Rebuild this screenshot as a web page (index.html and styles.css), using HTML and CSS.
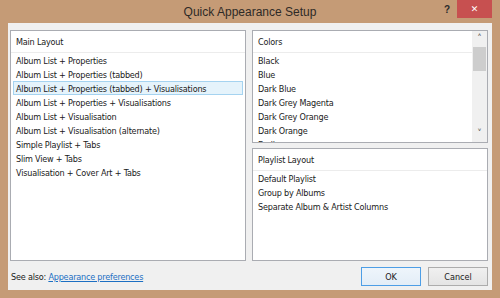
FILE: index.html
```html
<!DOCTYPE html>
<html lang="en">
<head>
  <meta charset="UTF-8">
  <title>Quick Appearance Setup</title>
  <link rel="stylesheet" href="styles.css">
</head>
<body>
  <div class="window">

    <!-- Title bar -->
    <div class="titlebar">
      <div class="title">Quick Appearance Setup</div>
      <div class="help">?</div>
      <div class="close">&#x2715;</div>
    </div>

    <div class="client">
      <div class="panels">

        <!-- Main layout list -->
        <div class="list main">
          <div class="list-head">Main Layout</div>
          <div class="list-body">
            <div class="row">Album List + Properties</div>
            <div class="row">Album List + Properties (tabbed)</div>
            <div class="row selected">Album List + Properties (tabbed) + Visualisations</div>
            <div class="row">Album List + Properties + Visualisations</div>
            <div class="row">Album List + Visualisation</div>
            <div class="row">Album List + Visualisation (alternate)</div>
            <div class="row">Simple Playlist + Tabs</div>
            <div class="row">Slim View + Tabs</div>
            <div class="row">Visualisation + Cover Art + Tabs</div>
          </div>
        </div>

        <div class="side">
          <!-- Colours list with scrollbar -->
          <div class="list colors">
            <div class="list-main">
              <div class="list-head">Colors</div>
              <div class="list-body">
                <div class="row">Black</div>
                <div class="row">Blue</div>
                <div class="row">Dark Blue</div>
                <div class="row">Dark Grey Magenta</div>
                <div class="row">Dark Grey Orange</div>
                <div class="row">Dark Orange</div>
                <div class="row">Endless</div>
              </div>
            </div>
            <div class="scrollbar">
              <div class="arrow">&#x2C4;</div>
              <div class="thumb"></div>
              <div class="track"></div>
              <div class="arrow">&#x2C5;</div>
            </div>
          </div>

          <!-- Playlist layout list -->
          <div class="list playlist">
            <div class="list-head">Playlist Layout</div>
            <div class="list-body">
              <div class="row">Default Playlist</div>
              <div class="row">Group by Albums</div>
              <div class="row">Separate Album &amp; Artist Columns</div>
            </div>
          </div>
        </div>

      </div>

      <div class="footer">
        <div class="see-also">See also: <a href="#">Appearance preferences</a></div>
        <div class="buttons">
          <button class="btn default">OK</button>
          <button class="btn">Cancel</button>
        </div>
      </div>
    </div>

  </div>
</body>
</html>
```

FILE: styles.css
```css
/* Reset + base */
* { margin:0; padding:0; box-sizing:border-box; }
body {
  background:#c59b76;
  font-family:"DejaVu Sans Condensed", "Liberation Sans", sans-serif;
  font-size:9px;
  letter-spacing:-0.2px;
  color:#1a1a1a;
}
.window { width:500px; height:298px; display:flex; flex-direction:column; }

/* Title bar */
.titlebar {
  height:23px;
  display:flex; align-items:flex-start;
  position:relative;
}
.title {
  flex:1;
  text-align:center;
  font-family:"Liberation Sans", sans-serif;
  font-size:12px; letter-spacing:0;
  color:#2e2a26;
  line-height:24px;
}
.help {
  position:absolute; top:0; left:441px;
  width:12px; line-height:20px;
  font-family:"Liberation Sans", sans-serif;
  font-weight:bold; font-size:10px; color:#2b2b2b;
  text-align:center;
}
.close {
  position:absolute; top:0; left:457px;
  width:35px; height:18px;
  background:#c75050; color:#fff;
  font-family:"DejaVu Sans", sans-serif;
  font-size:9px; line-height:18px; text-align:center;
}

/* Client area */
.client {
  flex:1;
  margin:0 8px 8px 8px;
  background:#f0f0f0;
  padding:7px 4px 0 2px;
  display:flex; flex-direction:column;
}
.panels {
  height:231px;
  display:flex; gap:6px;
}
.side {
  width:236px;
  display:flex; flex-direction:column; gap:5px;
}

/* List boxes */
.list {
  background:#fff;
  border:1px solid #aaacb2;
  overflow:hidden;
}
.list.main { width:236px; }
.list.colors { height:113px; display:flex; }
.list.playlist { flex:1; }
.list-main { flex:1; overflow:hidden; }
.list-head {
  height:22px;
  padding:0 5px;
  line-height:22px;
  border-bottom:1px solid #ececec;
}
.list-body { padding:0 2px; }
.row {
  height:14px; line-height:14px;
  padding:0 2px;
  white-space:nowrap;
  border:1px solid transparent;
}
.row.selected {
  background:#e5f3fb;
  border-color:#a5d3f0;
}

/* Scrollbar */
.scrollbar {
  width:15px;
  background:#f0f0f0;
  display:flex; flex-direction:column;
}
.arrow {
  height:16px;
  font-size:10px; line-height:16px; text-align:center;
  color:#606060;
}
.thumb { height:24px; background:#cdcdcd; margin:0 1px; }
.track { flex:1; }

/* Footer */
.footer {
  flex:1;
  display:flex; align-items:center; justify-content:space-between;
  padding:2px 0 0 0;
}
.see-also { padding-left:1px; }
.see-also a { color:#1c6fc3; }
.buttons { display:flex; gap:7px; }
.btn {
  width:60px; height:19px;
  font-family:inherit; font-size:9px; color:#1a1a1a;
  background:linear-gradient(#f0f0f0, #e4e4e4);
  border:1px solid #acacac;
}
.btn.default { border-color:#4d9ee6; background:linear-gradient(#eef5fb, #e3edf7); }
```
